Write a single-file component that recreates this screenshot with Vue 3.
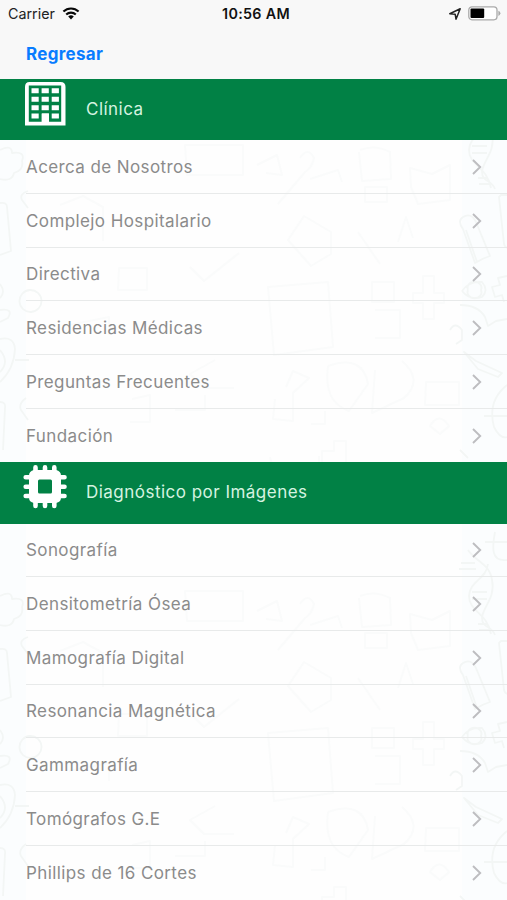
<script setup>
import { ref } from 'vue';

const sections = ref([
  {
    title: 'Clínica',
    icon: 'building',
    items: [
      { name: 'Acerca de Nosotros' },
      { name: 'Complejo Hospitalario' },
      { name: 'Directiva' },
      { name: 'Residencias Médicas' },
      { name: 'Preguntas Frecuentes' },
      { name: 'Fundación' }
    ]
  },
  {
    title: 'Diagnóstico por Imágenes',
    icon: 'chip',
    items: [
      { name: 'Sonografía' },
      { name: 'Densitometría Ósea' },
      { name: 'Mamografía Digital' },
      { name: 'Resonancia Magnética' },
      { name: 'Gammagrafía' },
      { name: 'Tomógrafos G.E' },
      { name: 'Phillips de 16 Cortes' }
    ]
  }
]);
</script>

<template>
  <div class="screen">
    <svg class="doodles" viewBox="0 0 507 900" aria-hidden="true">
      <defs>
        <g id="tile">
          <!-- DNA -->
          <path d="M468 104c8 12 22 14 24 30 4 18-10 28-10 38s10 8 13 17M461 117h14M459 123h17M488 118c-2 16-18 16-19 32 0 16 18 16 22 38M472 146h15M472 153h15M478 178h10M479 184h12" />
          <path d="M510 195h-9l-2 2 5 47q1 4 5 4M485 96h22M495 86c-3 16-4 30 12 28" />
          <path d="M463 217q-6 4 0 12l12 34q8-5 15-7l-14-34q-5-10-13-5M466 230l11 32" />
          <path d="M462 291q7-10 20-9 7 8 0 15-12 4-20-6M468 290a7 6 0 1 0 13 0 7 6 0 1 0-13 0" />
          <path d="M507 276l-9 2 2 7-8 2 3 10 7-2 2 7M460 305q18 0 25 12l3 9 8-5 11-2M450 330q5-9 12 0v10l-6 4" />
          <path d="M464 352l12 9 26 12-4 4-20-8zM507 385q-20 16-13 42 6 12 13 10M484 416h23M460 450l8 8" />
          <!-- left side -->
          <path d="M0 150q12-6 12 3 14-2 10 8 2 9-8 12-2 9-14 6M0 203q7-1 7 4l4 44-11 4M28 191q-9 3-6 9l6 8" />
          <path d="M30 290a11 11 0 1 0 1 22 11 11 0 1 0-1-22M0 284q6 8 0 14M0 310q14-2 8 8l-8 4" />
          <path d="M0 339q14-3 15 10-1 20-15 33M0 350q10 12 0 22M15 360h14M0 402q6 0 5 6l-2 42M26 398q-8 6-5 12l7 10" />
        </g>
        <g id="faint">
          <path d="M360 150q15-6 30 2l1 27-29 2-3-29M365 187h22v15h-22zM257 165l20-10 5 20-16-2M300 158q8-12 14 0-2 10-9 14l-27 32M310 179l28-9 4 12" />
          <path d="M288 240l16-24 27 16v22l-20 12zM358 232l22 32M398 242l8-25 7 21M410 168l22 6 18-9v35l-32 4-7-17z" />
          <path d="M268 287l60-5 5 65-59 8zM372 282h22v20h-22zM413 293h10v-17h11v17h10v10h-10v16h-11v-16h-10zM375 310h25v28h-25" />
          <path d="M328 366q35-12 40 18l-19 27q-26-9-21-45M375 370l-3 43 32-15q20-18-2-37M286 387l7-16 16 7-16 15v28l-20-2 2-20M426 382h33v23h-34zM430 426q9-15 19 0l-9 8z" />
          <path d="M185 145h58v30h-56zM60 205l23-9 20 11v34M119 268h28v22h-29zM190 267l14 14 35-28M69 325l40-8v18M215 360l-25 14 14 14h30M132 399l18-4v27h-20M175 410h30v-15" />
          <path d="M311 424h14v-13M322 451h12v-10h12v23h-24zM270 457l3 13h46v-14" />
        </g>
      </defs>
      <rect class="edge" x="0" y="140" width="26" height="760" />
      <rect class="edge" x="462" y="140" width="45" height="760" />
      <use class="line" href="#tile" />
      <use class="line" href="#tile" y="446" />
      <use class="soft" href="#faint" />
      <use class="soft" href="#faint" y="446" />
    </svg>

    <header class="top">
      <div class="status">
        <div class="carrier">
          <span>Carrier</span>
          <svg class="wifi" viewBox="0 0 18 13">
            <path d="M1.4 4.6a11 11 0 0 1 15.2 0M4.2 7.5a7 7 0 0 1 9.6 0" fill="none" stroke="#080808" stroke-width="2.1" />
            <path d="M6.2 9.6a4.2 4.2 0 0 1 5.6 0L9 12.4z" fill="#080808" />
          </svg>
        </div>
        <span class="time">10:56 AM</span>
        <div class="indicators">
          <svg class="location" viewBox="0 0 12 12">
            <path d="M11.2.8 7 11.2 6.2 6.3.8 5.7z" fill="none" stroke="#222" stroke-width="1.5" stroke-linejoin="round" />
          </svg>
          <svg class="battery" viewBox="0 0 33 15">
            <rect x=".8" y=".8" width="28.2" height="13" rx="3.2" fill="#fff" stroke="#aaa" stroke-width="1.3" />
            <rect x="2.5" y="2.5" width="13.7" height="9.600" rx="1" fill="#000" />
            <path d="M30.400 4.700q2 .8 2 2.600t-2 2.600z" fill="#aaa" />
          </svg>
        </div>
      </div>
      <button class="back">Regresar</button>
    </header>

    <section v-for="section in sections" :key="section.title">
      <div class="section-header">
        <svg v-if="section.icon === 'building'" class="icon" viewBox="0 0 46 46">
          <path d="M7.5 1h31q5 0 5 5v38.500h-40.500V6q0-5 4.500-5z" fill="#fff" />
          <path d="M6.800 4.500h32.400v36.200H27V32.500h-7v8.200H6.800z" fill="#018145" />
          <path d="M9.500 7.200h7.200v5H9.500zM19.600 7.200h7.200v5h-7.200zM29.700 7.200h7.200v5h-7.200zM9.500 15.700h7.200v5H9.500zM19.600 15.700h7.200v5h-7.200zM29.700 15.700h7.200v5h-7.200zM9.500 24.200h7.200v5H9.500zM19.600 24.200h7.200v5h-7.200zM29.700 24.200h7.200v5h-7.200zM9.500 32.500h7.200v5H9.500zM29.700 32.500h7.200v5h-7.200zM19.600 32.500h7.200v9h-7.200z" fill="#fff" />
        </svg>
        <svg v-else class="icon" viewBox="0 0 46 46">
          <path d="M13.500 3.400v6M23 3.400v6M32.300 3.400v6M13.500 36v6M23 36v6M32.300 36v6M3.700 13.300h6M3.700 22.700h6M3.700 32h6M36.500 13.300h6M36.500 22.700h6M36.500 32h6" stroke="#fff" stroke-width="4.600" stroke-linecap="round" />
          <path fill-rule="evenodd" d="M12 6h22q5 1 5 5.500v22q0 4.500-5 5.500H12q-5-1-5-5.500v-22Q7 7 12 6zm5.500 9.600q-1.500 0-1.500 1.500v11q0 1.500 1.500 1.500h11q1.500 0 1.500-1.500v-11q0-1.500-1.500-1.500z" fill="#fff" />
        </svg>
        <h2 class="title">{{ section.title }}</h2>
      </div>
      <ul class="list">
        <li v-for="item in section.items" :key="item.name" class="row">
          <span>{{ item.name }}</span>
          <svg class="chevron" viewBox="0 0 10 16">
            <path d="M1 1l7.2 7L1 15" fill="none" stroke="#bdbdc0" stroke-width="1.9" />
          </svg>
        </li>
      </ul>
    </section>
  </div>
</template>

<style>
body {
  margin: 0;
  overflow: hidden;
}
</style>

<style scoped>
.screen {
  position: relative;
  width: 100%;
  height: 900px;
  overflow: hidden;
  background-color: #fefefe;
  font-family: Inter, 'Liberation Sans', sans-serif;
}

.doodles {
  position: absolute;
  top: 0;
  left: 0;
  width: 507px;
  height: 900px;
}

.edge {
  fill: #fbfdfe;
}

.line,
.soft {
  fill: none;
  stroke: #f3f6f5;
  stroke-width: 1.8;
  stroke-linejoin: round;
}

.soft {
  stroke: #fafbfb;
  stroke-width: 2;
}

.top {
  position: relative;
  height: 79px;
  background-color: #f8f8f8;
}

.status {
  display: grid;
  grid-template-columns: 1fr auto 1fr;
  align-items: center;
  height: 27px;
  padding: 0 6px 0 8px;
  font-size: 14.3px;
  color: #222;
}

.carrier,
.indicators {
  display: flex;
  align-items: center;
}

.carrier {
  gap: 7px;
}

.wifi {
  width: 18px;
  height: 13px;
}

.time {
  padding-left: 3px;
  font-weight: 600;
  color: #111;
  letter-spacing: 0.3px;
}

.indicators {
  justify-content: flex-end;
  gap: 7px;
}

.location {
  width: 12px;
  height: 12px;
}

.battery {
  width: 33px;
  height: 15px;
}

.back {
  display: block;
  margin: 15px 0 0 26px;
  padding: 0;
  border: none;
  background: none;
  font-family: inherit;
  font-size: 17px;
  font-weight: 700;
  line-height: 24px;
  letter-spacing: 0.3px;
  color: #087cff;
}

.section-header {
  position: relative;
  display: flex;
  align-items: flex-start;
  gap: 18px;
  height: 61.2px;
  padding-left: 22px;
  box-sizing: border-box;
  background-color: #018145;
}

.icon {
  width: 46px;
  height: 46px;
  margin-top: 2px;
}

.title {
  margin: 18px 0 0;
  font-size: 17px;
  font-weight: 400;
  line-height: 24px;
  letter-spacing: 0.48px;
  color: #d5f3e0;
}

.list {
  position: relative;
  margin: 0;
  padding: 0 0 0 26px;
  list-style: none;
}

.row {
  display: flex;
  align-items: center;
  justify-content: space-between;
  height: 53.7px;
  padding: 1px 25px 0 0;
  box-sizing: border-box;
  border-bottom: 1px solid #e8eaea;
  font-size: 17px;
  letter-spacing: 0.4px;
  color: #8b8b8b;
}

.row:last-child {
  border-bottom: none;
}

.chevron {
  width: 10px;
  height: 16px;
}
</style>
